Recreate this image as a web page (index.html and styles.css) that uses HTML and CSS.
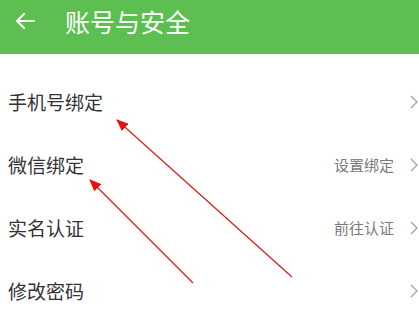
FILE: index.html
```html
<!DOCTYPE html>
<html lang="zh-CN">
<head>
    <meta charset="UTF-8">
    <meta name="viewport" content="width=device-width, initial-scale=1.0">
    <title>账号与安全</title>
    <link rel="stylesheet" href="styles.css">
</head>
<body>
    <div class="header">
        <div class="header-row">
            <svg class="back" width="20" height="18" viewBox="0 0 20 18">
                <path d="M19 9 H2 M9 2 L2 9 L9 16" fill="none" stroke="#fff" stroke-width="2" stroke-linecap="round" stroke-linejoin="round"/>
            </svg>
            <span class="title">账号与安全</span>
        </div>
    </div>

    <div class="list">
        <div class="row">
            <span class="label">手机号绑定</span>
            <span class="right">
                <svg class="chevron" width="10" height="16" viewBox="0 0 10 16"><path d="M2 2 L8 8 L2 14" fill="none" stroke="#a0a0a0" stroke-width="1.3"/></svg>
            </span>
        </div>
        <div class="row">
            <span class="label">微信绑定</span>
            <span class="right">
                <span class="value">设置绑定</span>
                <svg class="chevron" width="10" height="16" viewBox="0 0 10 16"><path d="M2 2 L8 8 L2 14" fill="none" stroke="#a0a0a0" stroke-width="1.3"/></svg>
            </span>
        </div>
        <div class="row">
            <span class="label">实名认证</span>
            <span class="right">
                <span class="value">前往认证</span>
                <svg class="chevron" width="10" height="16" viewBox="0 0 10 16"><path d="M2 2 L8 8 L2 14" fill="none" stroke="#a0a0a0" stroke-width="1.3"/></svg>
            </span>
        </div>
        <div class="row">
            <span class="label">修改密码</span>
            <span class="right">
                <svg class="chevron" width="10" height="16" viewBox="0 0 10 16"><path d="M2 2 L8 8 L2 14" fill="none" stroke="#a0a0a0" stroke-width="1.3"/></svg>
            </span>
        </div>
    </div>

    <!-- red annotation arrows drawn over the list -->
    <svg class="annotations" width="419" height="333" viewBox="0 0 419 333">
        <defs>
            <marker id="head" markerWidth="12" markerHeight="10" refX="11" refY="5" orient="auto" markerUnits="userSpaceOnUse">
                <path d="M0 0 L12 5 L0 10 Z" fill="#e8100c"/>
            </marker>
        </defs>
        <line x1="292" y1="277" x2="117" y2="120" stroke="#e01818" stroke-width="1.2" marker-end="url(#head)"/>
        <line x1="193" y1="283" x2="90" y2="180" stroke="#e01818" stroke-width="1.2" marker-end="url(#head)"/>
    </svg>
</body>
</html>
```

FILE: styles.css
```css
body {
    margin: 0;
    font-family: "Noto Sans CJK SC", "Noto Sans", sans-serif;
    background-color: #fff;
    width: 419px;
    height: 333px;
    overflow: hidden;
    position: relative;
}

.header {
    background-color: #5dbf51;
    height: 54px;
}

.header-row {
    height: 42px;
    display: flex;
    align-items: center;
    padding-left: 15px;
}

.back {
    display: block;
}

.title {
    color: #fff;
    font-size: 25px;
    margin-left: 30px;
    line-height: 1;
}

.list {
    margin-top: 16px;
}

.row {
    height: 63px;
    display: flex;
    align-items: center;
    justify-content: space-between;
    padding-left: 8px;
}

.label {
    font-size: 19px;
    color: #333;
}

.right {
    display: flex;
    align-items: center;
}

.value {
    font-size: 15px;
    color: #7a7a7a;
    margin-right: 15px;
}

.chevron {
    display: block;
    margin-right: 0;
}

.annotations {
    position: absolute;
    left: 0;
    top: 0;
    pointer-events: none;
}
```
